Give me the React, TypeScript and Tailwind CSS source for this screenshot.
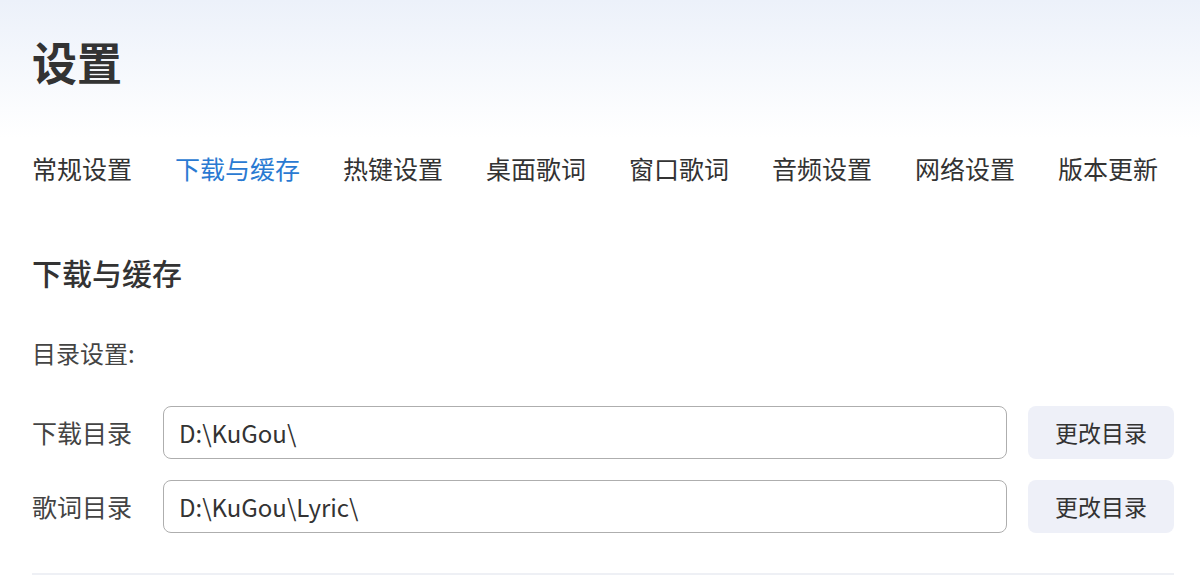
import React from "react";

const tabs = [
  "常规设置",
  "下载与缓存",
  "热键设置",
  "桌面歌词",
  "窗口歌词",
  "音频设置",
  "网络设置",
  "版本更新",
];

const dirs = [
  { label: "下载目录", path: "D:\\KuGou\\" },
  { label: "歌词目录", path: "D:\\KuGou\\Lyric\\" },
];

export default function App() {
  const active = "下载与缓存";

  return (
    <div
      className="h-[576px] w-[1200px] overflow-hidden bg-gradient-to-b from-[#ecf1fa] to-white to-[24%] pl-[32px] pr-[26px] text-[#333] [font-family:'Noto_Sans_CJK_SC','Noto_Sans',sans-serif]"
    >
      {/* Page title */}
      <h1 className="mt-[39px] h-[45px] text-[45px] font-bold leading-[45px] text-[#333]">
        设置
      </h1>

      {/* Tabs */}
      <nav className="mt-[68px] flex h-[32px] items-center gap-[43px]">
        {tabs.map((tab) => (
          <button
            key={tab}
            className={
              tab === active
                ? "text-[25px] leading-[32px] text-[#2a7ad2]"
                : "text-[25px] leading-[32px] text-[#333]"
            }
          >
            {tab}
          </button>
        ))}
      </nav>

      {/* Section */}
      <h2 className="mt-[73px] h-[30px] text-[30px] font-medium leading-[30px] text-[#333]">
        下载与缓存
      </h2>

      <p className="mt-[54px] h-[24px] text-[24px] leading-[24px] text-[#444]">
        目录设置:
      </p>

      <div className="mt-[41px] flex flex-col gap-[21px]">
        {dirs.map((dir) => (
          <div key={dir.label} className="flex h-[53px] items-center">
            <span className="mr-[31px] w-[100px] text-[25px] text-[#444]">
              {dir.label}
            </span>
            <div className="flex h-full flex-1 items-center rounded-[8px] border-[1.5px] border-[#aeaeae] bg-white pl-[15px] text-[24px] text-[#333]">
              {dir.path}
            </div>
            <button className="ml-[21px] h-full w-[146px] rounded-[8px] bg-[#eef0f8] text-[23px] text-[#333]">
              更改目录
            </button>
          </div>
        ))}
      </div>

      <div className="mt-[40px] h-[2px] bg-[#eef0f5]" />
    </div>
  );
}
